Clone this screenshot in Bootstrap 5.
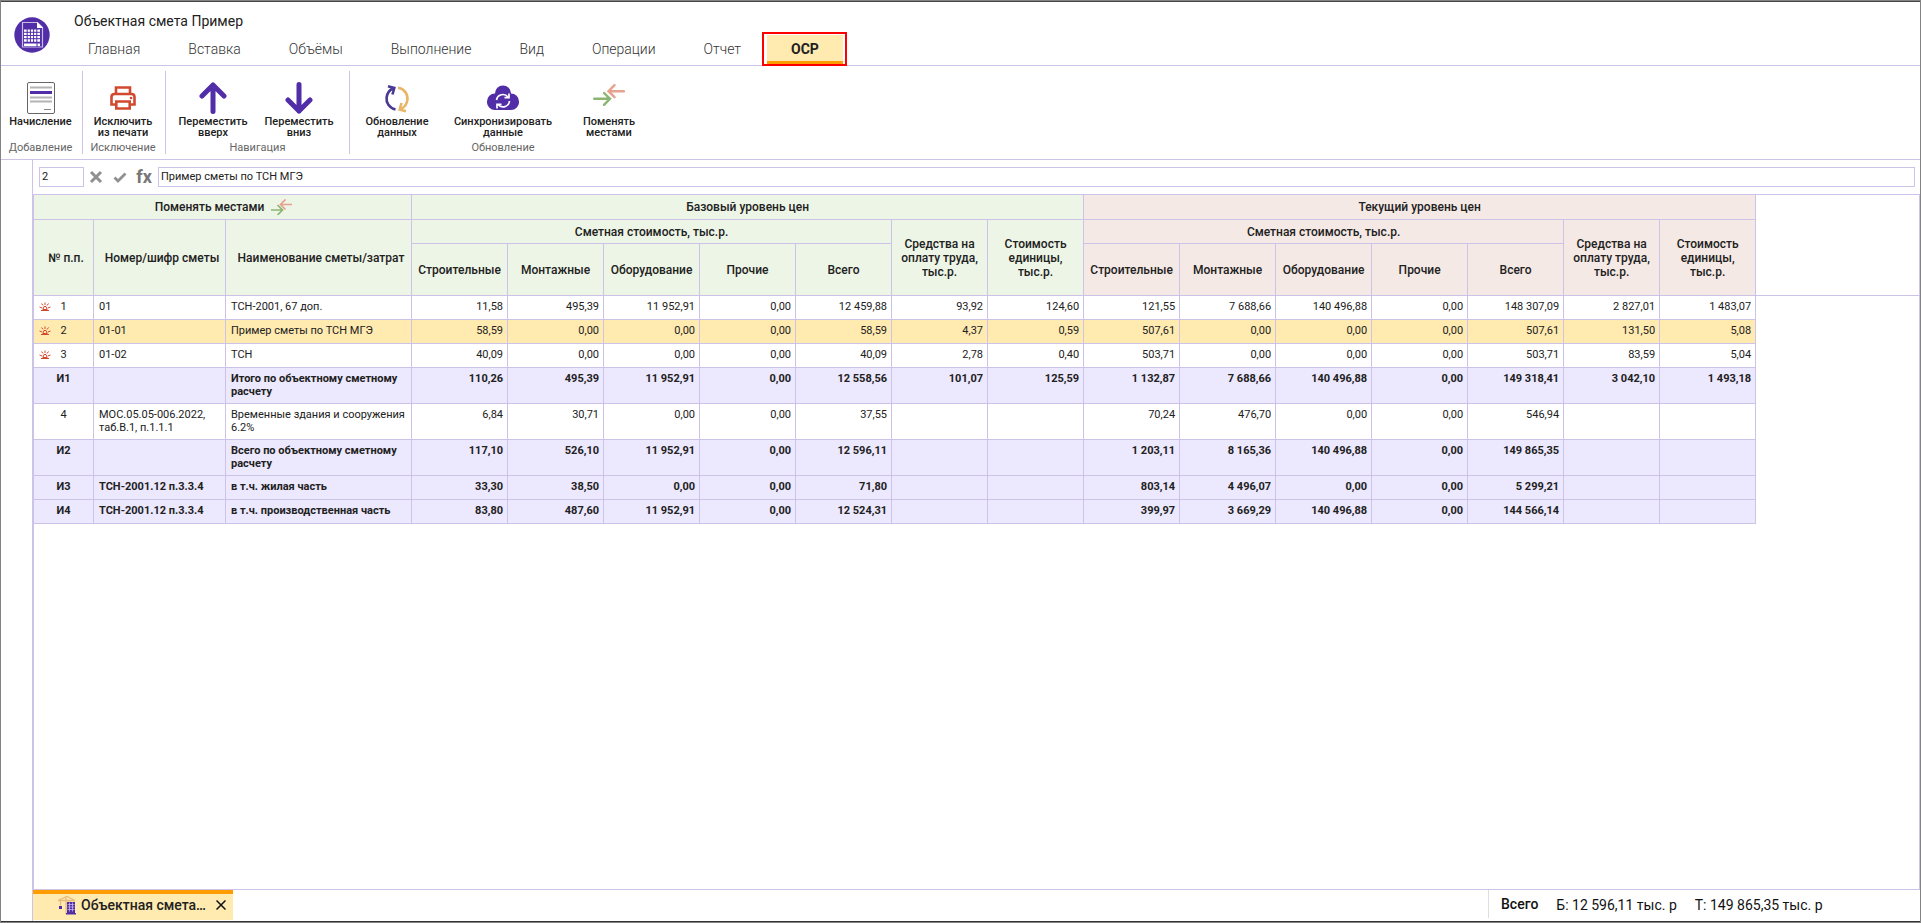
<!DOCTYPE html>
<html lang="ru">
<head>
<meta charset="utf-8">
<meta name="viewport" content="width=device-width, initial-scale=1">
<title>Объектная смета Пример</title>
<link href="https://cdn.jsdelivr.net/npm/bootstrap@5.3.0/dist/css/bootstrap.min.css" rel="stylesheet">
<style>
  :root { --line: #cdc3e9; --violet: #512da8; --sand: #ffeab0; --orange: #ff9d00; }
  body { font-family: Roboto, "Liberation Sans", sans-serif; font-size: 14px; line-height: 16px; color: #212121; background: #fff; border: 1px solid #838383; }
  svg { display: block; flex: none; }
  button { color: inherit; }

  .app-head { border-top: 1px solid #484448; border-bottom: 1px solid var(--line); }
  .app-logo { padding: 15px 0 0 13px; width: 63px; }
  .app-title { padding: 11px 0 6px 10px; font-size: 14px; margin: 0; font-weight: 400; line-height: 16px; }
  .tab-link { padding: 6px 24px 4px; border-bottom: 3px solid transparent; font-size: 14px; line-height: 16px; font-weight: 300; color: #333; text-decoration: none; }
  .tab-link.active { background: var(--sand); border-color: var(--orange); font-weight: 700; color: #212121; }
  .tab-frame { border: 2px solid #f00; padding: 1px 2px 0 3px; margin: -3px 0 -1px -3px; background: #fff; }

  .ribbon { border-bottom: 1px solid var(--line); padding: 5px 0; }
  .tool-group { border-right: 1px solid var(--line); height: 83px; }
  .tool-group:last-child { border-right: 0; }
  .tool { background: none; border: 0; padding: 11px 0 0; font-size: 11px; line-height: 11px; font-weight: 500; }
  .tool svg { margin: 0 auto 2px; }
  .g-short { padding-right: 2px; }
  .w-a { width: 79px; } .w-b { width: 80px; } .w-c { width: 86px; } .w-d { width: 94px; } .w-e { width: 118px; }
  .g-nav { width: 184px; }
  .tool-caption { font-size: 11px; line-height: 13px; color: #666; text-align: center; }

  .gutter { width: 31px; }
  .work { border-left: 1px solid var(--line); min-width: 0; }
  .formula { padding: 7px 5px 7px 6px; border-bottom: 1px solid var(--line); }
  .formula input { height: 20px; border: 1px solid var(--line); padding: 0 2px 2px; font-size: 11px; line-height: 16px; color: #212121; border-radius: 0; min-width: 0; }
  .cell-no { width: 45px; }
  .icon-btn { background: none; border: 0; padding: 0; width: 24px; height: 20px; display: flex; align-items: center; justify-content: center; color: #909090; }
  .formula .fx { font-size: 18px; line-height: 20px; font-weight: 700; color: #777; width: 26px; padding-right: 2px; }

  .sheet { border-left: 1px solid var(--line); border-right: 1px solid var(--line); overflow: hidden; }
  .head-rest { height: 101px; border-bottom: 1px solid var(--line); }
  .grid { table-layout: fixed; width: 1722px; flex: none; border-collapse: separate; border-spacing: 0; font-size: 11px; line-height: 13px; }
  .grid th, .grid td { border: 0 solid var(--line); border-width: 0 1px 1px 0; }
  .grid thead th { font-size: 12px; line-height: 14px; font-weight: 500; text-align: center; vertical-align: middle; padding: 0; background: #edf5e6; }
  .grid thead th.now { background: #f5e9e5; }
  .grid thead th.wide { padding-left: 5px; }
  .r1 { height: 25px; } .r2 { height: 24px; } .r3 { height: 52px; }
  .grid td { height: 24px; padding: 4px 4px 5px 5px; vertical-align: top; text-align: right; }
  .grid td:nth-child(1) { text-align: center; padding-right: 5px; }
  .grid td:nth-child(2), .grid td:nth-child(3) { text-align: left; padding-right: 0; }
  .grid .picked td { background: var(--sand); }
  .grid .total td { background: #ece8fe; font-weight: 700; }
  .row-no { padding-right: 12px; }
  .swap { background: none; border: 0; padding: 0 0 0 2px; font-weight: 500; font-size: 12px; line-height: 14px; gap: 6px; }

  .foot { border-bottom: 1px solid #333; }
  .foot-line { border-top: 1px solid var(--line); }
  .doc-tab { width: 200px; height: 30px; margin-bottom: 1px; border-top: 4px solid var(--orange); background: var(--sand); padding: 0 7px 5px 24px; font-weight: 500; }
  .sums { width: 432px; border-left: 1px solid #dedede; padding: 6px 0 0 12px; margin-bottom: 3px; gap: 18px; line-height: 18px; font-size: 14px; color: #111; }
  .sums-label { line-height: 16px; font-weight: 500; }
</style>
</head>
<body class="d-flex flex-column vh-100">

<svg class="d-none" aria-hidden="true"><symbol id="lamp" viewBox="0 0 12 12"><path d="M2 9.500h8M3.800 8.500 5 5.500h2l1.200 3zM6 4V1.500M4 4.500 2.500 2.500M8 4.500l1.500-2M3.200 7 .5 6M8.800 7l2.700-1" fill="none" stroke="#d1492e"/></symbol></svg>

<header class="app-head d-flex">
  <div class="app-logo">
    <svg width="36" height="36" viewBox="0 0 36 36"><circle cx="18" cy="18" r="17.700" fill="#512da8"/><path d="M8.500 5.500h15l5 5V30h-20z" fill="none" stroke="#c9bde6" stroke-width="1.200"/><path d="M23 5v6h6" fill="#fff"/><path d="M10 12.500h16v12.300H10zM10 26.500h16v2.500H10z" fill="#fff"/><path d="M10 15.300h16M10 18.500h16M10 21.700h16M13.200 12v13M16.400 12v13M19.600 12v13M22.800 12v13M23 26v4" stroke="#512da8" stroke-width="1"/></svg>
  </div>
  <div>
    <h1 class="app-title">Объектная смета Пример</h1>
    <nav class="d-flex align-items-start">
      <a class="tab-link" href="#">Главная</a>
      <a class="tab-link" href="#">Вставка</a>
      <a class="tab-link" href="#">Объёмы</a>
      <a class="tab-link" href="#">Выполнение</a>
      <a class="tab-link" href="#">Вид</a>
      <a class="tab-link" href="#">Операции</a>
      <a class="tab-link" href="#">Отчет</a>
      <div class="tab-frame d-flex"><a class="tab-link active" href="#" aria-current="page">ОСР</a></div>
    </nav>
  </div>
</header>

<div class="ribbon d-flex" role="toolbar" aria-label="ОСР">
  <div class="tool-group g-short d-flex flex-column justify-content-between">
    <button type="button" class="tool w-a">
      <svg width="28" height="32" viewBox="0 0 28 32"><rect x=".5" y=".5" width="27" height="31" rx="1.500" fill="#fff" stroke="#666"/><path d="M3 5.500h22M3 15.500h22M3 19.500h22" stroke="#b4b4b4" stroke-width="2"/><path d="M3 10.500h22" stroke="#512da8" stroke-width="3"/><path d="M17 27.500h7" stroke="#888"/></svg>
      Начисление
    </button>
    <div class="tool-caption">Добавление</div>
  </div>
  <div class="tool-group g-short d-flex flex-column justify-content-between">
    <button type="button" class="tool w-b">
      <svg width="28" height="32" viewBox="0 0 28 32"><g fill="none" stroke="#d1492e" stroke-width="2.600"><path d="M7 12V5.500h14V12"/><path d="M7 22.500H2.500V15q0-3 3-3h17q3 0 3 3v7.500H21"/><path d="M7.300 19.500h13.400v7H7.300z"/></g><circle cx="22" cy="16" r="1.300" fill="#d1492e"/></svg>
      Исключить<br>из печати
    </button>
    <div class="tool-caption">Исключение</div>
  </div>
  <div class="tool-group g-nav d-flex flex-column justify-content-between">
    <div class="d-flex ps-1">
      <button type="button" class="tool w-c">
        <svg width="28" height="32" viewBox="0 0 28 32"><path d="M14 29.500V3M3 14 14 3l11 11" fill="none" stroke="#512da8" stroke-width="5" stroke-linecap="round" stroke-linejoin="round"/></svg>
        Переместить<br>вверх
      </button>
      <button type="button" class="tool w-c">
        <svg width="28" height="32" viewBox="0 0 28 32"><path d="M14 2.500V29M3 18l11 11 11-11" fill="none" stroke="#512da8" stroke-width="5" stroke-linecap="round" stroke-linejoin="round"/></svg>
        Переместить<br>вниз
      </button>
    </div>
    <div class="tool-caption">Навигация</div>
  </div>
  <div class="tool-group d-flex flex-column justify-content-between">
    <div class="d-flex align-items-start">
      <button type="button" class="tool w-d">
        <svg width="28" height="32" viewBox="0 0 28 32"><g fill="none" stroke-width="2.600"><path d="M12.500 27.500C6 26 3 20.500 3.600 15.500 4.200 11 6.500 8 10 6.500" stroke="#4a3a94"/><path d="M5 4.200l6.300 1.800-1.800 6.500" stroke="#4a3a94"/><path d="M15 5.800c6.500 1 10 6.500 9.400 12-.6 4.500-3.200 7.500-6.400 9" stroke="#e9b566"/><path d="M23 29.200 16.700 27.500l1.800-6.500" stroke="#e9b566"/></g></svg>
        Обновление<br>данных
      </button>
      <button type="button" class="tool w-e">
        <svg width="32" height="32" viewBox="0 0 32 32"><path d="M8 28a8 8 0 0 1-8-8.500 8 8 0 0 1 8-8 8 8 0 0 1 16 0 8 8 0 0 1 8 8A8 8 0 0 1 24 28z" fill="#512da8"/><g fill="none" stroke="#fff" stroke-width="1.700"><path d="M9.500 18a6.500 6.500 0 0 1 11.500-3M22.500 19a6.500 6.500 0 0 1-11.500 3.500"/><path d="M22 11.500v4.200h-4.500M10 26.500v-4.200h4.500"/></g></svg>
        Синхронизировать<br>данные
      </button>
      <button type="button" class="tool w-d">
        <svg width="32" height="32" viewBox="0 0 32 32"><g fill="none" stroke-width="2.400" stroke-linecap="round"><path d="M1.200 16.800H17M11 11l6 5.800-6 6" stroke="#8cb574"/><path d="M31 9.200H15.500M21.500 3.200l-6 6 6 6" stroke="#e8a18f"/></g></svg>
        Поменять<br>местами
      </button>
    </div>
    <div class="tool-caption">Обновление</div>
  </div>
</div>

<main class="d-flex flex-grow-1">
  <div class="gutter flex-shrink-0"></div>
  <div class="work d-flex flex-column flex-grow-1">
    <form class="formula d-flex align-items-center">
      <input class="cell-no" type="text" value="2" aria-label="Номер строки">
      <button type="button" class="icon-btn" aria-label="Отменить"><svg width="14" height="14" viewBox="0 0 14 14"><path d="M2 2l10 10M12 2 2 12" stroke="currentColor" stroke-width="3"/></svg></button>
      <button type="button" class="icon-btn" aria-label="Принять"><svg width="14" height="14" viewBox="0 0 14 14"><path d="M1.500 7.500 5 11l7.500-7.500" fill="none" stroke="currentColor" stroke-width="2.800"/></svg></button>
      <button type="button" class="icon-btn fx">fx</button>
      <input class="flex-grow-1" type="text" value="Пример сметы по ТСН МГЭ" aria-label="Значение">
    </form>

    <div class="sheet d-flex align-items-start flex-grow-1">
      <table class="grid">
        <colgroup><col style="width:60px"><col style="width:132px"><col style="width:186px"><col span="14" style="width:96px"></colgroup>
        <thead>
          <tr class="r1">
            <th colspan="3"><button type="button" class="swap d-inline-flex align-items-center">Поменять местами
              <svg width="22" height="16" viewBox="0 0 22 16"><g fill="none" stroke-width="1.700"><path d="M1 11h11M7.500 6l5 5-5 5" stroke="#8cb574"/><path d="M22 5.500H11M15.500.5l-5 5 5 5" stroke="#e8a18f"/></g></svg></button></th>
            <th colspan="7">Базовый уровень цен</th>
            <th colspan="7" class="now">Текущий уровень цен</th>
          </tr>
          <tr class="r2">
            <th rowspan="2" class="wide">№ п.п.</th>
            <th rowspan="2" class="wide">Номер/шифр сметы</th>
            <th rowspan="2" class="wide">Наименование сметы/затрат</th>
            <th colspan="5">Сметная стоимость, тыс.р.</th>
            <th rowspan="2">Средства на<br>оплату труда,<br>тыс.р.</th>
            <th rowspan="2">Стоимость<br>единицы,<br>тыс.р.</th>
            <th colspan="5" class="now">Сметная стоимость, тыс.р.</th>
            <th rowspan="2" class="now">Средства на<br>оплату труда,<br>тыс.р.</th>
            <th rowspan="2" class="now">Стоимость<br>единицы,<br>тыс.р.</th>
          </tr>
          <tr class="r3">
            <th>Строительные</th><th>Монтажные</th><th>Оборудование</th><th>Прочие</th><th>Всего</th>
            <th class="now">Строительные</th><th class="now">Монтажные</th><th class="now">Оборудование</th><th class="now">Прочие</th><th class="now">Всего</th>
          </tr>
        </thead>
        <tbody>
          <tr><td><div class="row-no d-flex align-items-center"><svg width="12" height="12"><use href="#lamp"/></svg><span class="flex-grow-1">1</span></div></td><td>01</td><td>ТСН-2001, 67 доп.</td><td>11,58</td><td>495,39</td><td>11 952,91</td><td>0,00</td><td>12 459,88</td><td>93,92</td><td>124,60</td><td>121,55</td><td>7 688,66</td><td>140 496,88</td><td>0,00</td><td>148 307,09</td><td>2 827,01</td><td>1 483,07</td></tr>
          <tr class="picked"><td><div class="row-no d-flex align-items-center"><svg width="12" height="12"><use href="#lamp"/></svg><span class="flex-grow-1">2</span></div></td><td>01-01</td><td>Пример сметы по ТСН МГЭ</td><td>58,59</td><td>0,00</td><td>0,00</td><td>0,00</td><td>58,59</td><td>4,37</td><td>0,59</td><td>507,61</td><td>0,00</td><td>0,00</td><td>0,00</td><td>507,61</td><td>131,50</td><td>5,08</td></tr>
          <tr><td><div class="row-no d-flex align-items-center"><svg width="12" height="12"><use href="#lamp"/></svg><span class="flex-grow-1">3</span></div></td><td>01-02</td><td>ТСН</td><td>40,09</td><td>0,00</td><td>0,00</td><td>0,00</td><td>40,09</td><td>2,78</td><td>0,40</td><td>503,71</td><td>0,00</td><td>0,00</td><td>0,00</td><td>503,71</td><td>83,59</td><td>5,04</td></tr>
          <tr class="total"><td>И1</td><td></td><td>Итого по объектному сметному расчету</td><td>110,26</td><td>495,39</td><td>11 952,91</td><td>0,00</td><td>12 558,56</td><td>101,07</td><td>125,59</td><td>1 132,87</td><td>7 688,66</td><td>140 496,88</td><td>0,00</td><td>149 318,41</td><td>3 042,10</td><td>1 493,18</td></tr>
          <tr><td>4</td><td>МОС.05.05-006.2022, таб.В.1, п.1.1.1</td><td>Временные здания и сооружения 6.2%</td><td>6,84</td><td>30,71</td><td>0,00</td><td>0,00</td><td>37,55</td><td></td><td></td><td>70,24</td><td>476,70</td><td>0,00</td><td>0,00</td><td>546,94</td><td></td><td></td></tr>
          <tr class="total"><td>И2</td><td></td><td>Всего по объектному сметному расчету</td><td>117,10</td><td>526,10</td><td>11 952,91</td><td>0,00</td><td>12 596,11</td><td></td><td></td><td>1 203,11</td><td>8 165,36</td><td>140 496,88</td><td>0,00</td><td>149 865,35</td><td></td><td></td></tr>
          <tr class="total"><td>И3</td><td>ТСН-2001.12 п.3.3.4</td><td>в т.ч. жилая часть</td><td>33,30</td><td>38,50</td><td>0,00</td><td>0,00</td><td>71,80</td><td></td><td></td><td>803,14</td><td>4 496,07</td><td>0,00</td><td>0,00</td><td>5 299,21</td><td></td><td></td></tr>
          <tr class="total"><td>И4</td><td>ТСН-2001.12 п.3.3.4</td><td>в т.ч. производственная часть</td><td>83,80</td><td>487,60</td><td>11 952,91</td><td>0,00</td><td>12 524,31</td><td></td><td></td><td>399,97</td><td>3 669,29</td><td>140 496,88</td><td>0,00</td><td>144 566,14</td><td></td><td></td></tr>
        </tbody>
      </table>
      <div class="head-rest flex-grow-1"></div>
    </div>
  </div>
</main>

<footer class="foot d-flex">
  <div class="gutter flex-shrink-0"></div>
  <div class="foot-line work d-flex flex-grow-1 justify-content-between">
    <div class="doc-tab d-flex align-items-center">
      <svg class="me-1" width="20" height="20" viewBox="0 0 20 20"><g fill="none" stroke="#e8bd7c"><path d="M1 5.500h17M2 5l8-3.500L17 5M9 1v18M12 5v14M3.500 5.500v5M9 8l3 3-3 3" stroke-width="1.300"/></g><path d="M2 11h3v3H2zM9 18h10v1.500H9zM10 7h8v12h-8z" fill="#512da8"/><path d="M10.500 9.500h7M10.500 12h7M10.500 14.500h7M12.500 7.500v9M15.500 7.500v9" stroke="#c6b4ea" stroke-width=".8"/></svg>
      <span class="flex-grow-1">Объектная смета…</span>
      <button type="button" class="border-0 bg-transparent p-0" aria-label="Закрыть"><svg width="10" height="10" viewBox="0 0 10 10"><path d="M.5.5l9 9M9.500.5l-9 9" stroke="#111" stroke-width="1.500"/></svg></button>
    </div>
    <div class="sums d-flex align-items-start">
      <span class="sums-label">Всего</span><span>Б: 12 596,11 тыс. р</span><span>Т: 149 865,35 тыс. р</span>
    </div>
  </div>
</footer>

<script src="https://cdn.jsdelivr.net/npm/bootstrap@5.3.0/dist/js/bootstrap.bundle.min.js"></script>
</body>
</html>
